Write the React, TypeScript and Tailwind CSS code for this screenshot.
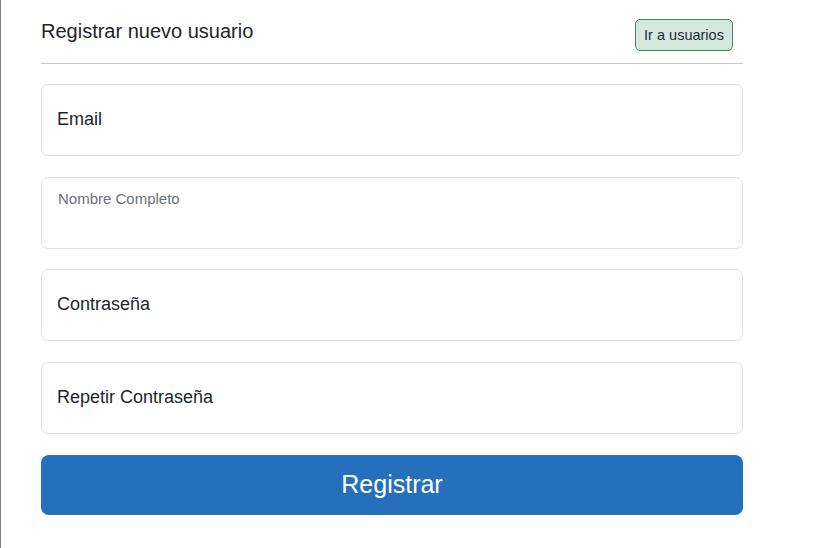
import { useState } from "react";

const campos = [
  { id: "email", label: "Email", type: "email", small: false },
  { id: "nombre", label: "Nombre Completo", type: "text", small: true },
  { id: "password", label: "Contraseña", type: "password", small: false },
  { id: "password2", label: "Repetir Contraseña", type: "password", small: false },
];

export default function App() {
  const [values, setValues] = useState<Record<string, string>>({});

  return (
    <div
      className="h-[548px] w-[840px] bg-white border-l border-[#808080] pl-[40px] text-[#212529]"
      style={{ fontFamily: '"Liberation Sans", Arial, sans-serif' }}
    >
      <div className="w-[702px]">
        {/* cabecera */}
        <div className="flex items-start justify-between pt-[19px]">
          <h5 className="text-[20px] leading-[24px]">Registrar nuevo usuario</h5>
          <button className="mr-[10px] h-[32px] w-[98px] rounded-[5px] border border-[#3a8a5e] bg-[#d4e8de] text-[14.5px] leading-[21px] text-[#1f2a36]">
            Ir a usuarios
          </button>
        </div>
        <hr className="mt-[12px] border-t border-[#c9c9c9]" />

        {/* formulario */}
        <form className="mt-[20px] flex flex-col gap-[20.7px]">
          {campos.map((c) => (
            <label
              key={c.id}
              className="relative block h-[72px] rounded-[7px] border border-[#dee2e6]"
            >
              {c.small ? (
                <span className="absolute left-[16px] top-[10px] text-[15px] leading-[22px] text-[#6c7075]">
                  {c.label}
                </span>
              ) : (
                <span className="absolute left-[15px] top-[21px] text-[18px] leading-[26px] text-[#212529]">
                  {values[c.id] ? "" : c.label}
                </span>
              )}
              <input
                type={c.type}
                value={values[c.id] ?? ""}
                onChange={(e) => setValues({ ...values, [c.id]: e.target.value })}
                className="h-full w-full bg-transparent px-[15px] pt-[20px] text-[18px] outline-none"
              />
            </label>
          ))}
          <button
            type="button"
            className="h-[60px] w-full rounded-[8px] bg-[#256fbd] text-[25px] text-white"
          >
            Registrar
          </button>
        </form>
      </div>
    </div>
  );
}
